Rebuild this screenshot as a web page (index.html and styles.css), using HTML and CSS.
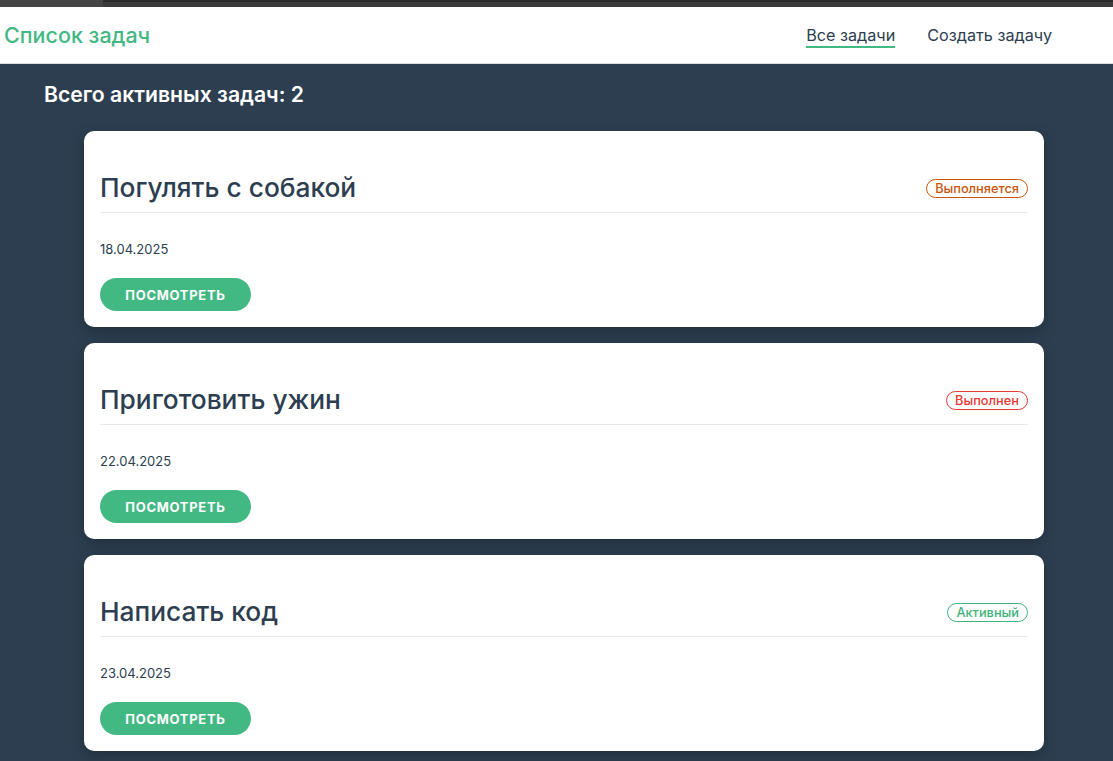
FILE: index.html
```html
<!DOCTYPE html>
<html lang="ru">
<head>
<meta charset="utf-8">
<title>Список задач</title>
<link rel="stylesheet" href="styles.css">
</head>
<body>
<div class="chrome"><div class="chrome-tab"></div><div class="chrome-rest"></div></div>
<header class="topbar">
  <a class="logo" href="#">Список задач</a>
  <nav class="nav">
    <a class="nav-link active" href="#">Все задачи</a>
    <a class="nav-link" href="#">Создать задачу</a>
  </nav>
</header>
<main class="content">
  <h1 class="summary">Всего активных задач: 2</h1>
  <div class="task-list">
    <article class="card">
      <div class="card-head">
        <h2 class="card-title">Погулять с собакой</h2>
        <span class="badge badge-progress">Выполняется</span>
      </div>
      <div class="card-date">18.04.2025</div>
      <button class="btn">Посмотреть</button>
    </article>
    <article class="card">
      <div class="card-head">
        <h2 class="card-title">Приготовить ужин</h2>
        <span class="badge badge-done">Выполнен</span>
      </div>
      <div class="card-date">22.04.2025</div>
      <button class="btn">Посмотреть</button>
    </article>
    <article class="card">
      <div class="card-head">
        <h2 class="card-title">Написать код</h2>
        <span class="badge badge-active">Активный</span>
      </div>
      <div class="card-date">23.04.2025</div>
      <button class="btn">Посмотреть</button>
    </article>
  </div>
</main>
</body>
</html>
```

FILE: styles.css
```css
* { box-sizing: border-box; }
html, body {
  margin: 0;
  padding: 0;
  background: #2c3e50;
  font-family: Inter, "Noto Sans", sans-serif;
  color: #2c3e50;
  height: 100%;
  overflow: hidden;
}
.chrome {
  display: flex;
  height: 7px;
  background: #3a3a3a;
}
.chrome-tab {
  width: 103px;
  background: #444444;
}
.chrome-rest {
  flex: 1;
  border-top: 2px solid #2b2b2b;
}
.topbar {
  display: flex;
  align-items: center;
  justify-content: space-between;
  height: 57px;
  background: #ffffff;
  border-bottom: 1px solid #d9dde2;
  padding: 0 61px 0 4px;
}
.logo {
  color: #42b883;
  font-size: 21.5px;
  font-weight: 500;
  text-decoration: none;
}
.nav {
  display: flex;
  gap: 32px;
  align-items: center;
}
.nav-link {
  color: #2c3e50;
  font-size: 16.2px;
  text-decoration: none;
  padding: 2px 0 1px;
  border-bottom: 2px solid transparent;
}
.nav-link.active {
  border-bottom-color: #42b883;
}
.content {
  padding: 18px 0 0 44px;
}
.summary {
  margin: 0 0 25px;
  color: #ffffff;
  font-size: 21.2px;
  font-weight: 600;
  line-height: 24px;
}
.task-list {
  display: flex;
  flex-direction: column;
  gap: 16px;
  width: 960px;
  margin-left: 40px;
}
.card {
  background: #ffffff;
  border-radius: 10px;
  padding: 16px;
  box-shadow: 0 4px 14px rgba(0, 0, 0, 0.25);
}
.card-head {
  display: flex;
  align-items: center;
  justify-content: space-between;
  padding-top: 25px;
  padding-bottom: 8px;
  border-bottom: 1px solid #e6e8ec;
}
.card-title {
  margin: 0;
  font-size: 26.3px;
  font-weight: 500;
  line-height: 32px;
  color: #2c3e50;
}
.badge {
  font-size: 12.8px;
  font-weight: 500;
  line-height: 17px;
  padding: 0 8px;
  border: 1px solid currentColor;
  border-radius: 10px;
}
.badge-progress { color: #c9560c; }
.badge-done { color: #e53935; }
.badge-active { color: #3fb37a; }
.card-date {
  margin-top: 28px;
  font-size: 13px;
  line-height: 16px;
  color: #2c3e50;
}
.btn {
  display: block;
  margin-top: 21px;
  height: 33px;
  width: 151px;
  border: none;
  border-radius: 17px;
  background: #42b883;
  color: #ffffff;
  font-family: Inter, "Noto Sans", sans-serif;
  font-size: 13px;
  font-weight: 700;
  letter-spacing: 0.7px;
  text-transform: uppercase;
  cursor: pointer;
}
```
